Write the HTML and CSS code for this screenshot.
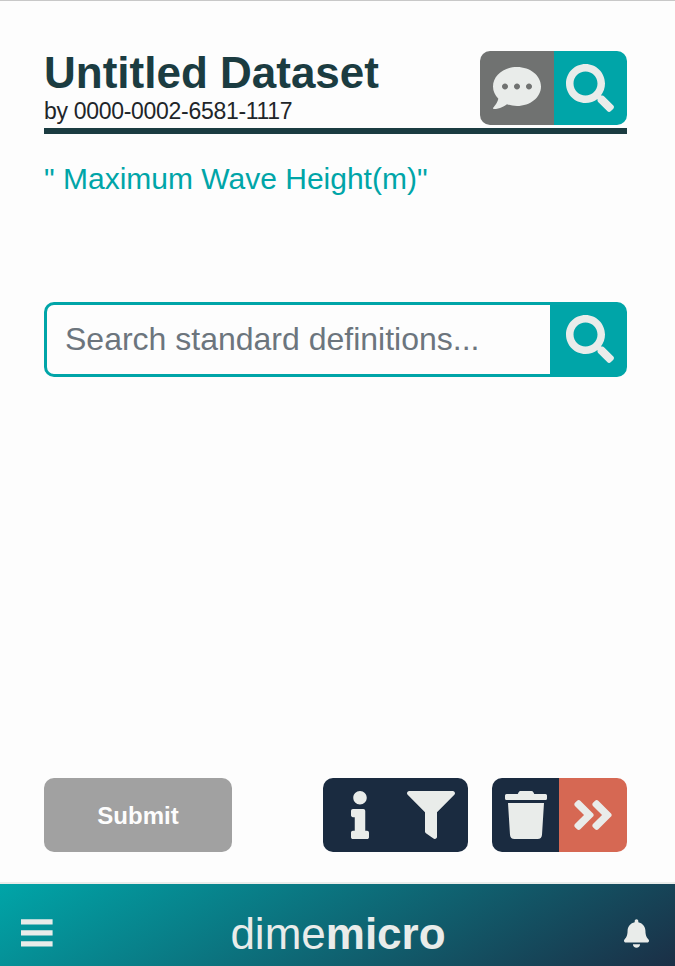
FILE: index.html
```html
<!DOCTYPE html>
<html lang="en">
<head>
<meta charset="utf-8">
<title>dimemicro</title>
<link rel="stylesheet" href="styles.css">
</head>
<body>
<svg class="defs" aria-hidden="true">
<symbol id="search" viewBox="0 0 512 512"><path d="M505 442.700L405.300 343c-4.500-4.500-10.600-7-17-7H372c27.600-35.300 44-79.700 44-128C416 93.100 322.900 0 208 0S0 93.100 0 208s93.100 208 208 208c48.300 0 92.700-16.400 128-44v16.300c0 6.400 2.500 12.500 7 17l99.700 99.700c9.400 9.400 24.600 9.400 33.900 0l28.300-28.300c9.400-9.400 9.400-24.600.1-34zM208 336c-70.700 0-128-57.200-128-128 0-70.700 57.200-128 128-128 70.700 0 128 57.200 128 128 0 70.700-57.200 128-128 128z"/></symbol>
</svg>
<main class="page">
  <header class="head">
    <div>
      <h1>Untitled Dataset</h1>
      <p class="author">by 0000-0002-6581-1117</p>
    </div>
    <div class="group">
      <button class="btn gray" aria-label="Comments"><svg viewBox="0 0 512 512"><path d="M256 32C114.600 32 0 125.100 0 240c0 49.600 21.400 95 57 130.700C44.500 421.100 2.700 466 2.200 466.500c-2.200 2.300-2.800 5.700-1.500 8.700S4.800 480 8 480c66.300 0 116-31.800 140.600-51.400 32.700 12.300 69 19.400 107.400 19.400 141.400 0 256-93.100 256-208S397.400 32 256 32zM128 272c-17.700 0-32-14.300-32-32s14.300-32 32-32 32 14.300 32 32-14.300 32-32 32zm128 0c-17.700 0-32-14.300-32-32s14.300-32 32-32 32 14.300 32 32-14.300 32-32 32zm128 0c-17.700 0-32-14.300-32-32s14.300-32 32-32 32 14.300 32 32-14.300 32-32 32z"/></svg></button>
      <button class="btn teal" aria-label="Search"><svg><use href="#search"/></svg></button>
    </div>
  </header>
  <h2>" Maximum Wave Height(m)"</h2>
  <div class="searchbar">
    <input type="text" placeholder="Search standard definitions...">
    <button class="btn teal find" aria-label="Search"><svg><use href="#search"/></svg></button>
  </div>
  <div class="actions">
    <button class="submit">Submit</button>
    <div class="group tools">
      <button class="btn navy info" aria-label="Info"><svg viewBox="-160 0 512 512"><path d="M20 424.200h20V279.800H20c-11 0-20-9-20-20V212c0-11 9-20 20-20h112c11 0 20 9 20 20v212.200h20c11 0 20 9 20 20V492c0 11-9 20-20 20H20c-11 0-20-9-20-20v-47.800c0-11 9-20 20-20zM96 0C56.200 0 24 32.200 24 72s32.200 72 72 72 72-32.200 72-72S135.800 0 96 0z"/></svg></button>
      <button class="btn navy filter" aria-label="Filter"><svg viewBox="0 0 512 512"><path d="M488 0H24C2.700 0-8 25.900 7.100 41L192 226v206c0 7.800 3.800 15.200 10.200 19.700l80 56C298 518.700 320 507.500 320 488V226L505 41C520 25.900 509.300 0 488 0z"/></svg></button>
    </div>
    <div class="group">
      <button class="btn navy trash" aria-label="Delete"><svg viewBox="-32 0 512 512"><path d="M432 32H312l-9.400-18.700A24 24 0 0 0 281.100 0H166.800a23.700 23.700 0 0 0-21.400 13.300L136 32H16A16 16 0 0 0 0 48v32a16 16 0 0 0 16 16h416a16 16 0 0 0 16-16V48a16 16 0 0 0-16-16zM53.200 467a48 48 0 0 0 47.900 45h245.800a48 48 0 0 0 47.900-45L416 128H32z"/></svg></button>
      <button class="btn coral" aria-label="Next"><svg viewBox="-32 0 512 512"><path d="M224.300 273l-136 136c-9.400 9.400-24.600 9.400-33.900 0l-22.600-22.600c-9.400-9.400-9.400-24.600 0-33.900l96.400-96.400-96.400-96.400c-9.400-9.400-9.400-24.600 0-33.900L54.300 103c9.400-9.400 24.600-9.400 33.900 0l136 136c9.500 9.400 9.500 24.600.1 34zm192-34l-136-136c-9.400-9.400-24.600-9.400-33.900 0l-22.600 22.600c-9.400 9.400-9.400 24.600 0 33.900l96.400 96.400-96.400 96.400c-9.400 9.400-9.400 24.600 0 33.900l22.600 22.600c9.400 9.400 24.600 9.400 33.900 0l136-136c9.400-9.200 9.400-24.400 0-33.800z"/></svg></button>
    </div>
  </div>
</main>
<footer class="foot">
  <svg class="menu" viewBox="0 0 32 28"><path d="M0 .3h31.600v5.200H0zM0 11.300h31.600v5.200H0zM0 22.300h31.600v5.200H0z"/></svg>
  <div class="brand">dime<b>micro</b></div>
  <svg class="bell" viewBox="0 0 448 512"><path d="M224 512c35.300 0 63.900-28.700 63.900-64H160.100c0 35.300 28.600 64 63.900 64zm215.400-149.700c-19.300-20.800-55.500-52-55.500-154.300 0-77.700-54.500-139.900-127.900-155.200V32c0-17.700-14.300-32-32-32s-32 14.300-32 32v20.800C118.600 68.100 64.100 130.300 64.100 208c0 102.300-36.200 133.500-55.500 154.300-6 6.400-8.700 14.100-8.600 21.700.1 16.400 13 32 32.100 32h383.800c19.100 0 32-15.600 32.100-32 .1-7.600-2.600-15.300-8.600-21.700z"/></svg>
</footer>
</body>
</html>
```
FILE: styles.css
```css
* { box-sizing: border-box; }
body {
  margin: 0;
  height: 966px;
  display: flex;
  flex-direction: column;
  overflow: hidden;
  background: #fdfdfd;
  border-top: 1px solid #c8c8c8;
  font-family: "Liberation Sans", Arial, sans-serif;
}
h1, h2, p { margin: 0; }
button { border: 0; padding: 0; font-family: inherit; }
.defs { display: none; }
.page {
  flex: 1;
  display: flex;
  flex-direction: column;
  padding: 50px 48px 30px 44px;
}
.head {
  display: flex;
  justify-content: space-between;
  align-items: flex-start;
  height: 83px;
  border-bottom: 6px solid #1b3c41;
}
h1 { font-size: 44px; line-height: 44px; color: #1b3c41; white-space: nowrap; }
.author { font-size: 23px; line-height: 32px; letter-spacing: -0.3px; color: #212529; }
.group { display: flex; height: 74px; border-radius: 10px; overflow: hidden; }
.btn {
  display: flex;
  align-items: center;
  justify-content: center;
  width: 73.5px;
  height: 100%;
  fill: #e9ecea;
}
.btn svg { width: 48px; height: 48px; }
.gray { background: #707271; }
.teal { background: #00a5a8; }
.navy { background: #1a2b40; }
.coral { background: #d66853; width: 68px; }
.trash { width: 67px; }
h2 {
  margin-top: 27px;
  font-size: 30px;
  line-height: 36px;
  font-weight: 400;
  color: #00a5a8;
}
.searchbar {
  display: flex;
  height: 75px;
  margin-top: 105px;
  border: 3px solid #00a5a8;
  border-radius: 10px;
  background: linear-gradient(to left, #00a5a8 74px, #fdfdfd 74px) border-box;
}
.searchbar input {
  flex: 1;
  min-width: 0;
  border: 0;
  padding: 0 18px;
  background: none;
  font: 32px "Liberation Sans", Arial, sans-serif;
}
.searchbar input::placeholder { color: #6c757d; opacity: 1; }
.find { width: 74px; padding: 0 0 1px 5px; background: #00a5a8; border-radius: 0 7px 7px 0; }
.actions { display: flex; height: 74px; margin-top: auto; }
.submit {
  width: 188px;
  border-radius: 10px;
  padding-top: 1px;
  background: #a1a1a1;
  color: #fdfdfd;
  font-size: 24px;
  font-weight: 700;
}
.tools { width: 145px; margin: 0 24px 0 auto; }
.info { width: 74px; }
.filter { width: 71px; padding-right: 4px; }
.foot {
  display: flex;
  align-items: center;
  justify-content: space-between;
  height: 84px;
  padding: 16px 26px 0 21px;
  border-top: 2px solid #e9ecea;
  background: linear-gradient(150deg, #00a5a8, #1b2f46);
  fill: #e9ecea;
  color: #e9ecea;
}
.menu { width: 32px; height: 28px; }
.bell { width: 25px; height: 29px; }
.brand { padding-top: 2px; margin-left: -1px; font-size: 44px; line-height: 50px; }
```
